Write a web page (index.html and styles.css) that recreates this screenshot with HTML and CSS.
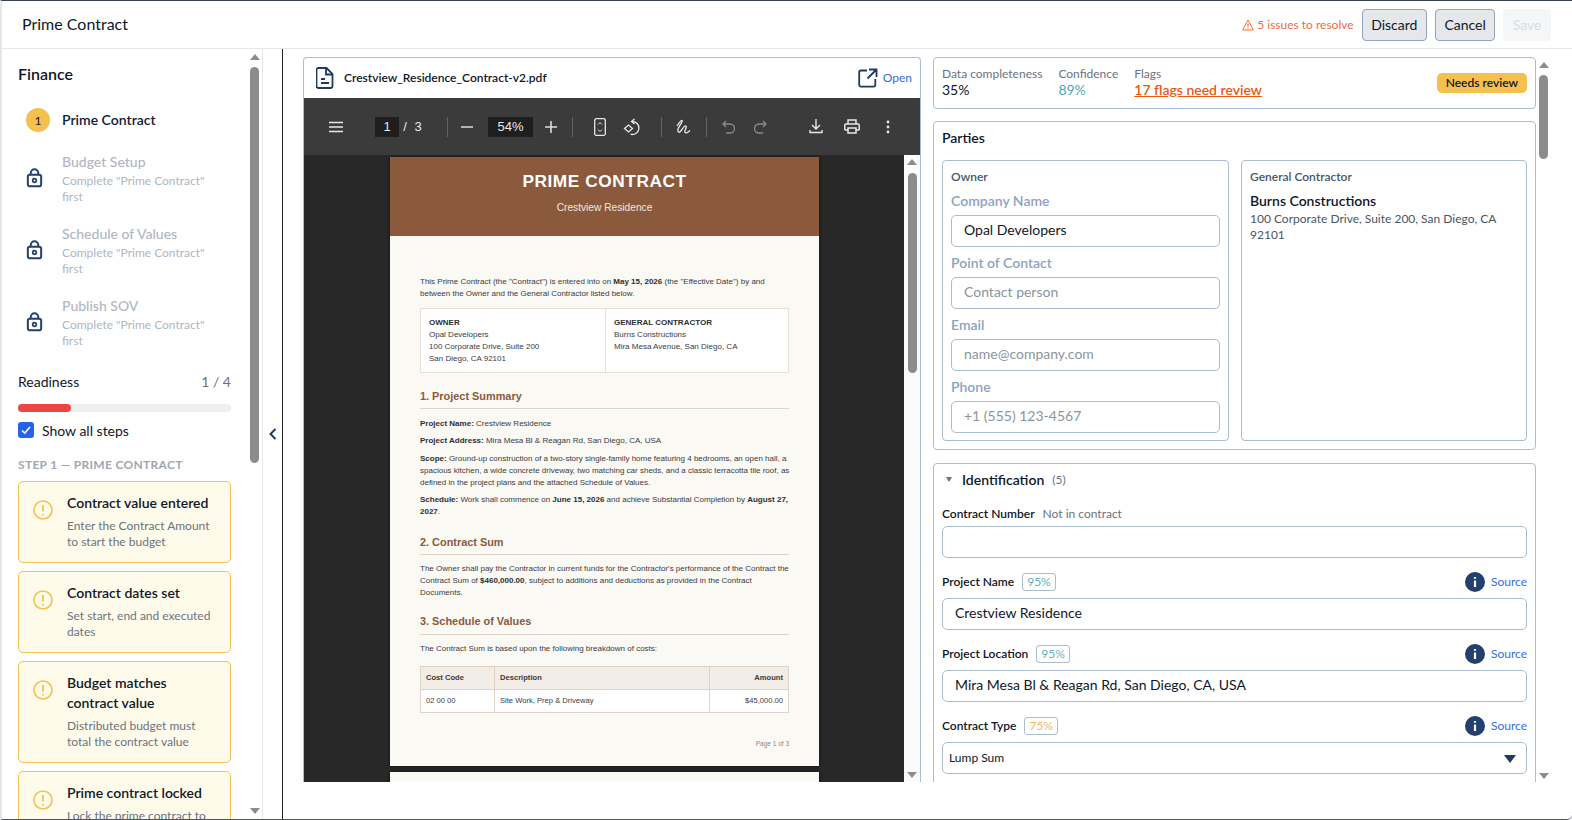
FILE: index.html
```html
<!DOCTYPE html>
<html lang="en">
<head>
    <meta charset="UTF-8">
    <title>Prime Contract</title>
    <link rel="stylesheet" href="styles.css">
</head>
<body>
    <svg class="defs" width="0" height="0">
        <symbol id="lock" viewBox="0 0 20 24"><path d="M5.5 8V6a4.5 4.5 0 0 1 9 0v2" fill="none" stroke="currentColor" stroke-width="2.4"/><rect x="2" y="8" width="16" height="14" rx="2.5" fill="none" stroke="currentColor" stroke-width="2.4"/><circle cx="10" cy="15" r="2.2" fill="none" stroke="currentColor" stroke-width="2"/></symbol>
        <symbol id="warn" viewBox="0 0 20 20"><circle cx="10" cy="10" r="9" fill="none" stroke="currentColor" stroke-width="1.6"/><path d="M10 5v6.5M10 14v1.4" fill="none" stroke="currentColor" stroke-width="1.8"/></symbol>
        <symbol id="info" viewBox="0 0 20 20"><circle cx="10" cy="10" r="10" fill="currentColor"/><path d="M10 8.5v6.5M10 5v1.8" stroke="#fff" stroke-width="2.2"/></symbol>
    </svg>

    <div class="app">
        <span class="green-tick"></span>

        <header class="topbar">
            <div class="topbar-title">Prime Contract</div>
            <div class="issues">
                <svg width="12" height="12" viewBox="0 0 12 12"><path d="M6 1 11.3 11H.7Z" fill="none" stroke="#f97316" stroke-width="1"/><path d="M6 4.5v3.3M6 8.8v1" stroke="#ef4444" stroke-width="1"/></svg>
                5 issues to resolve
            </div>
            <button class="btn">Discard</button>
            <button class="btn">Cancel</button>
            <button class="btn btn-off">Save</button>
        </header>

        <div class="content">
            <aside class="sidebar">
                <div class="side-body">
                    <h2 class="side-title">Finance</h2>

                    <div class="step step-current">
                        <span class="step-num">1</span>
                        <div class="step-name">Prime Contract</div>
                    </div>
                    <div class="step">
                        <svg class="step-lock"><use href="#lock"/></svg>
                        <div>
                            <div class="step-name">Budget Setup</div>
                            <div class="step-sub">Complete "Prime Contract"<br>first</div>
                        </div>
                    </div>
                    <div class="step">
                        <svg class="step-lock"><use href="#lock"/></svg>
                        <div>
                            <div class="step-name">Schedule of Values</div>
                            <div class="step-sub">Complete "Prime Contract"<br>first</div>
                        </div>
                    </div>
                    <div class="step">
                        <svg class="step-lock"><use href="#lock"/></svg>
                        <div>
                            <div class="step-name">Publish SOV</div>
                            <div class="step-sub">Complete "Prime Contract"<br>first</div>
                        </div>
                    </div>

                    <div class="ready-row"><span>Readiness</span><span class="ready-count">1 / 4</span></div>
                    <div class="progress"><div class="progress-fill" style="width: 25%"></div></div>
                    <label class="show-all">
                        <span class="checkbox"><svg width="12" height="12" viewBox="0 0 12 12"><path d="M2 6.5 4.8 9 10 3" fill="none" stroke="#fff" stroke-width="1.6"/></svg></span>
                        Show all steps
                    </label>
                    <div class="step-head">STEP 1 — PRIME CONTRACT</div>

                    <div class="check-card">
                        <svg class="check-icon"><use href="#warn"/></svg>
                        <div>
                            <div class="check-title">Contract value entered</div>
                            <div class="check-desc">Enter the Contract Amount to start the budget</div>
                        </div>
                    </div>
                    <div class="check-card">
                        <svg class="check-icon"><use href="#warn"/></svg>
                        <div>
                            <div class="check-title">Contract dates set</div>
                            <div class="check-desc">Set start, end and executed dates</div>
                        </div>
                    </div>
                    <div class="check-card">
                        <svg class="check-icon"><use href="#warn"/></svg>
                        <div>
                            <div class="check-title">Budget matches contract value</div>
                            <div class="check-desc">Distributed budget must total the contract value</div>
                        </div>
                    </div>
                    <div class="check-card">
                        <svg class="check-icon"><use href="#warn"/></svg>
                        <div>
                            <div class="check-title">Prime contract locked</div>
                            <div class="check-desc">Lock the prime contract to continue</div>
                        </div>
                    </div>
                </div>
                <div class="scroll scroll-side">
                    <span class="scroll-up"></span>
                    <span class="scroll-thumb"></span>
                    <span class="scroll-down"></span>
                </div>
            </aside>

            <div class="collapse-strip">
                <svg width="8" height="12" viewBox="0 0 8 12"><path d="M6.5 1 1.5 6l5 5" fill="none" stroke="#1e3a5f" stroke-width="2"/></svg>
            </div>

            <main class="main">
                <section class="pdf-card">
                    <div class="pdf-head">
                        <svg class="pdf-file" width="18" height="22" viewBox="0 0 18 22"><path d="M2.5 1h8L16.5 7v12a2 2 0 0 1-2 2h-12a2 2 0 0 1-2-2V3a2 2 0 0 1 2-2Z" fill="none" stroke="#1e3a5f" stroke-width="1.8"/><path d="M10 1.500V7.500h6M5 12h4M5 16h8" fill="none" stroke="#1e3a5f" stroke-width="1.8"/></svg>
                        <span class="pdf-name">Crestview_Residence_Contract-v2.pdf</span>
                        <svg class="pdf-open" width="20" height="20" viewBox="0 0 20 20"><path d="M9 2.500H3A1.800 1.800 0 0 0 1.200 4.300v12.500A1.800 1.800 0 0 0 3 18.600h12.500a1.800 1.800 0 0 0 1.800-1.800V11M11 1.500h7.500V9M18 2l-8.500 8.500" fill="none" stroke="#1e3a5f" stroke-width="1.800"/></svg>
                        <a class="link">Open</a>
                    </div>

                    <div class="pdf-tools">
                        <span class="tool"><svg width="16" height="12" viewBox="0 0 16 12"><path d="M1 1.500h14M1 6h14M1 10.500h14" stroke="#e8e8e8" stroke-width="1.500"/></svg></span>
                        <span class="page-box">1</span>
                        <span class="page-slash">/</span>
                        <span class="page-total">3</span>
                        <span class="sep sep-a"></span>
                        <span class="tool tool-minus"><svg width="12" height="2" viewBox="0 0 12 2"><path d="M0 1h12" stroke="#ddd" stroke-width="1.600"/></svg></span>
                        <span class="zoom-box">54%</span>
                        <span class="tool tool-plus"><svg width="12" height="12" viewBox="0 0 12 12"><path d="M0 6h12M6 0v12" stroke="#ddd" stroke-width="1.600"/></svg></span>
                        <span class="sep sep-b"></span>
                        <span class="tool tool-fit"><svg width="12" height="18" viewBox="0 0 12 18"><rect x=".7" y=".7" width="10.600" height="16.600" rx="1.500" fill="none" stroke="#e8e8e8" stroke-width="1.300"/><path d="m4 6.500 2-2 2 2M4 11.500l2 2 2-2" fill="none" stroke="#e8e8e8"/></svg></span>
                        <span class="tool"><svg width="18" height="18" viewBox="0 0 18 18"><path d="M9.500 3.500a6.500 6.500 0 1 1-2 12.700" fill="none" stroke="#e8e8e8" stroke-width="1.300"/><path d="M11.500 1 8.500 3.500l3 2.500" fill="none" stroke="#e8e8e8" stroke-width="1.300"/><path d="m5.500 7 4 3.500-4 3.500-4-3.500Z" fill="none" stroke="#e8e8e8" stroke-width="1.300"/></svg></span>
                        <span class="sep sep-c"></span>
                        <span class="tool tool-draw"><svg width="15" height="15" viewBox="0 0 15 15"><path d="M1 7c2-3 4-6 5-5.500S4 6 2.500 9 2.500 14 4 13s3-5 5-6 1 3 0 4.500 1 3 2.500 2 2-1.500 2.500-2" fill="none" stroke="#e8e8e8" stroke-width="1.300"/></svg></span>
                        <span class="sep sep-d"></span>
                        <span class="tool tool-undo"><svg width="13" height="14" viewBox="0 0 13 14"><path d="M4 1 1 4l3 3M1 4h7a4 4 0 0 1 0 9H4" fill="none" stroke="#8a8a8a" stroke-width="1.300"/></svg></span>
                        <span class="tool"><svg width="13" height="14" viewBox="0 0 13 14"><path d="m9 1 3 3-3 3M12 4H5a4 4 0 0 0 0 9h4" fill="none" stroke="#8a8a8a" stroke-width="1.300"/></svg></span>
                        <span class="tool-right">
                            <span class="tool"><svg width="14" height="15" viewBox="0 0 14 15"><path d="M7 0v9.500M3 6l4 4 4-4M1 11v2.500h12V11" fill="none" stroke="#e8e8e8" stroke-width="1.400"/></svg></span>
                            <span class="tool"><svg width="16" height="15" viewBox="0 0 16 15"><path d="M4 5V1h8v4M4 11H1.500A.8.8 0 0 1 .8 10V6A1 1 0 0 1 1.800 5h12.400a1 1 0 0 1 1 1v4a.8.8 0 0 1-.7 1H12M4 9h8v5H4Z" fill="none" stroke="#e8e8e8" stroke-width="1.500"/></svg></span>
                            <span class="tool"><svg width="4" height="14" viewBox="0 0 4 14"><circle cx="2" cy="2" r="1.400" fill="#e8e8e8"/><circle cx="2" cy="7" r="1.400" fill="#e8e8e8"/><circle cx="2" cy="12" r="1.400" fill="#e8e8e8"/></svg></span>
                        </span>
                    </div>

                    <div class="pdf-view">
                        <div class="pdf-pages">
                            <div class="sheet">
                                <div class="sheet-head">
                                    <div class="sheet-title">PRIME CONTRACT</div>
                                    <div class="sheet-sub">Crestview Residence</div>
                                </div>
                                <div class="sheet-body">
                                    <p class="intro">This Prime Contract (the "Contract") is entered into on <b>May 15, 2026</b> (the "Effective Date") by and<br>between the Owner and the General Contractor listed below.</p>
                                    <div class="sheet-parties">
                                        <div class="sheet-party"><b>OWNER</b><br>Opal Developers<br>100 Corporate Drive, Suite 200<br>San Diego, CA 92101</div>
                                        <div class="sheet-party"><b>GENERAL CONTRACTOR</b><br>Burns Constructions<br>Mira Mesa Avenue, San Diego, CA</div>
                                    </div>
                                    <h4 class="sheet-h h-one">1. Project Summary</h4>
                                    <p class="p-name"><b>Project Name:</b> Crestview Residence</p>
                                    <p class="p-addr"><b>Project Address:</b> Mira Mesa Bl &amp; Reagan Rd, San Diego, CA, USA</p>
                                    <p class="p-scope"><b>Scope:</b> Ground-up construction of a two-story single-family home featuring 4 bedrooms, an open hall, a<br>spacious kitchen, a wide concrete driveway, two matching car sheds, and a classic terracotta tile roof, as<br>defined in the project plans and the attached Schedule of Values.</p>
                                    <p class="p-addr"><b>Schedule:</b> Work shall commence on <b>June 15, 2026</b> and achieve Substantial Completion by <b>August 27,<br>2027</b>.</p>
                                    <h4 class="sheet-h h-two">2. Contract Sum</h4>
                                    <p class="p-sum">The Owner shall pay the Contractor in current funds for the Contractor's performance of the Contract the<br>Contract Sum of <b>$460,000.00</b>, subject to additions and deductions as provided in the Contract<br>Documents.</p>
                                    <h4 class="sheet-h h-three">3. Schedule of Values</h4>
                                    <p class="p-sov">The Contract Sum is based upon the following breakdown of costs:</p>
                                    <table class="sheet-table">
                                        <tr><th class="col-code">Cost Code</th><th class="col-desc">Description</th><th class="col-amt">Amount</th></tr>
                                        <tr><td>02 00 00</td><td>Site Work, Prep &amp; Driveway</td><td class="col-amt">$45,000.00</td></tr>
                                    </table>
                                    <div class="sheet-foot">Page 1 of 3</div>
                                </div>
                            </div>
                            <div class="sheet sheet-next"></div>
                        </div>
                        <div class="scroll scroll-pdf">
                            <span class="scroll-up"></span>
                            <span class="scroll-thumb"></span>
                            <span class="scroll-down"></span>
                        </div>
                    </div>
                </section>

                <section class="details">
                    <div class="card metrics">
                        <div class="metric"><div class="metric-label">Data completeness</div><div class="metric-val">35%</div></div>
                        <div class="metric"><div class="metric-label">Confidence</div><div class="metric-val val-teal">89%</div></div>
                        <div class="metric"><div class="metric-label">Flags</div><a class="metric-val val-flags">17 flags need review</a></div>
                        <span class="badge">Needs review</span>
                    </div>

                    <div class="card parties">
                        <h3 class="parties-title">Parties</h3>
                        <div class="parties-grid">
                            <div class="party">
                                <div class="party-label">Owner</div>
                                <div class="field-label">Company Name</div>
                                <input class="input input-party" value="Opal Developers">
                                <div class="field-label">Point of Contact</div>
                                <input class="input input-party" placeholder="Contact person">
                                <div class="field-label">Email</div>
                                <input class="input input-party" placeholder="name@company.com">
                                <div class="field-label">Phone</div>
                                <input class="input input-party" placeholder="+1 (555) 123-4567">
                            </div>
                            <div class="party">
                                <div class="party-label">General Contractor</div>
                                <div class="gc-name">Burns Constructions</div>
                                <div class="gc-addr">100 Corporate Drive, Suite 200, San Diego, CA 92101</div>
                            </div>
                        </div>
                    </div>

                    <div class="card ident">
                        <div class="ident-head">
                            <span class="caret"></span>
                            <span class="ident-title">Identification</span>
                            <span class="ident-count">(5)</span>
                        </div>

                        <div class="row-label">
                            <b>Contract Number</b><span class="not-in">Not in contract</span>
                        </div>
                        <input class="input">

                        <div class="row-label">
                            <b>Project Name</b><span class="pct pct-teal">95%</span>
                            <svg class="info"><use href="#info"/></svg><a class="link">Source</a>
                        </div>
                        <input class="input" value="Crestview Residence">

                        <div class="row-label">
                            <b>Project Location</b><span class="pct pct-teal">95%</span>
                            <svg class="info"><use href="#info"/></svg><a class="link">Source</a>
                        </div>
                        <input class="input" value="Mira Mesa Bl &amp; Reagan Rd, San Diego, CA, USA">

                        <div class="row-label">
                            <b>Contract Type</b><span class="pct pct-orange">75%</span>
                            <svg class="info"><use href="#info"/></svg><a class="link">Source</a>
                        </div>
                        <div class="select">Lump Sum<span class="select-arrow"></span></div>
                    </div>
                </section>

                <div class="scroll scroll-details">
                    <span class="scroll-up"></span>
                    <span class="scroll-thumb"></span>
                    <span class="scroll-down"></span>
                </div>
            </main>
        </div>
    </div>
</body>
</html>
```

FILE: styles.css
```css
* {
    margin: 0;
    padding: 0;
    box-sizing: border-box;
}

body {
    font-family: "Lato", sans-serif;
    color: #0f172a;
    background: #fff;
    width: 1572px;
    height: 820px;
    overflow: hidden;
}

.defs {
    position: absolute;
}

a {
    cursor: pointer;
}

.app {
    position: relative;
    height: 820px;
    display: flex;
    flex-direction: column;
    border-top: 1px solid #374151;
    border-bottom: 1px solid #4b5563;
    border-left: 2px solid #e5e7eb;
    border-bottom-right-radius: 5px;
    overflow: hidden;
}

.green-tick {
    position: absolute;
    left: -2px;
    top: 23px;
    width: 2px;
    height: 16px;
    background: #22c55e;
}

/* Top bar */
.topbar {
    height: 48px;
    flex: none;
    display: flex;
    align-items: center;
    gap: 8px;
    padding: 0 21px 0 20px;
    border-bottom: 1px solid #e5e7eb;
}

.topbar-title {
    font-size: 16px;
    flex: 1;
    padding-bottom: 2px;
}

.issues {
    display: flex;
    align-items: center;
    gap: 3px;
    font-size: 12px;
    color: #f26b3a;
}

.btn {
    height: 32px;
    padding: 0 8.5px;
    font-family: inherit;
    font-size: 14px;
    color: #0f172a;
    background: #e5e7eb;
    border: 1px solid #94a3b8;
    border-radius: 4px;
}

.btn-off {
    color: #d9dce1;
    background: #f5f6f7;
    border-color: #f5f6f7;
}

/* Layout */
.content {
    flex: 1;
    min-height: 0;
    display: flex;
}

.sidebar {
    width: 261px;
    flex: none;
    display: flex;
    border-right: 1px solid #e5e7eb;
}

.side-body {
    flex: 1;
    min-width: 0;
    overflow: hidden;
    padding: 15px 19px 0 16px;
}

.collapse-strip {
    width: 20px;
    flex: none;
    display: flex;
    align-items: center;
    justify-content: center;
    border-right: 1px solid #222;
}

.main {
    flex: 1;
    min-width: 0;
    height: 733px;
    display: flex;
    padding: 8px 0 0 20px;
}

/* Fake scrollbars */
.scroll {
    width: 9px;
    flex: none;
    display: flex;
    flex-direction: column;
    align-items: center;
}

.scroll-up {
    width: 0;
    height: 0;
    border-left: 5px solid transparent;
    border-right: 5px solid transparent;
    border-bottom: 6px solid #8c8c8c;
}

.scroll-down {
    width: 0;
    height: 0;
    margin-top: auto;
    border-left: 5px solid transparent;
    border-right: 5px solid transparent;
    border-top: 6px solid #8c8c8c;
}

.scroll-thumb {
    width: 9px;
    background: #8c8c8c;
    border-radius: 5px;
    margin-top: 7px;
}

.scroll-side {
    margin-right: 3px;
    padding: 5px 0;
}

.scroll-side .scroll-thumb {
    height: 396px;
}

.scroll-details {
    margin: 0 24px 0 3px;
    padding: 5px 0 3px;
}

.scroll-details .scroll-thumb {
    height: 84px;
}

/* Sidebar */
.side-title {
    font-size: 16px;
    font-weight: 600;
    line-height: 20px;
    margin-bottom: 21px;
}

.step {
    display: flex;
    align-items: center;
    gap: 19px;
    padding-left: 8px;
    height: 72px;
}

.step-current {
    height: 50px;
    gap: 12px;
    margin-top: -10px;
    margin-bottom: -3px;
}

.step-num {
    width: 24px;
    height: 24px;
    border-radius: 50%;
    background: #f6c04f;
    font-size: 12px;
    display: flex;
    align-items: center;
    justify-content: center;
}

.step-name {
    font-size: 14px;
    font-weight: 500;
    line-height: 20px;
    color: #b1b6c1;
}

.step-current .step-name {
    color: #111c33;
    font-weight: 600;
}

.step-sub {
    font-size: 12px;
    line-height: 16px;
    margin-top: 1px;
    color: #b1b6c1;
}

.step-lock {
    width: 17px;
    height: 20px;
    color: #23406e;
    flex: none;
}

.ready-row {
    display: flex;
    justify-content: space-between;
    font-size: 14px;
    line-height: 20px;
    margin-top: 14px;
}

.ready-count {
    color: #6b7280;
}

.progress {
    height: 8px;
    margin-top: 12px;
    background: #eeeff1;
    border-radius: 4px;
}

.progress-fill {
    height: 100%;
    background: #ef4444;
    border-radius: 4px;
}

.show-all {
    display: flex;
    align-items: center;
    gap: 8px;
    height: 16px;
    font-size: 14px;
    margin-top: 10px;
}

.checkbox {
    width: 16px;
    height: 16px;
    background: #2563eb;
    border-radius: 3px;
    display: flex;
    align-items: center;
    justify-content: center;
}

.step-head {
    font-size: 12px;
    font-weight: 700;
    letter-spacing: 0.3px;
    color: #a0a6b2;
    line-height: 16px;
    margin-top: 19px;
    margin-bottom: 8px;
    white-space: nowrap;
}

.check-card {
    display: flex;
    gap: 14px;
    padding: 11px 14px 12px 14px;
    margin-bottom: 8px;
    background: #fffbeb;
    border: 1px solid #f6c04f;
    border-radius: 5px;
}

.check-icon {
    width: 20px;
    height: 20px;
    flex: none;
    color: #f6c04f;
    margin-top: 7px;
}

.check-title {
    font-size: 14px;
    font-weight: 600;
    line-height: 20px;
    margin-bottom: 5px;
}

.check-desc {
    font-size: 12px;
    line-height: 16px;
    color: #6b7280;
}

/* PDF panel */
.pdf-card {
    width: 618px;
    flex: none;
    display: flex;
    flex-direction: column;
    border: 1px solid #a9bdd3;
    border-bottom: 0;
    border-radius: 4px 4px 0 0;
    overflow: hidden;
}

.pdf-head {
    height: 40px;
    flex: none;
    display: flex;
    align-items: center;
    padding: 0 8px 0 12px;
}

.pdf-name {
    font-size: 12px;
    font-weight: 600;
    margin: 0 0 2px 10px;
    flex: 1;
}

.pdf-open {
    margin-right: 5px;
}

.link {
    font-size: 12px;
    color: #2f6fe0;
}

.pdf-head .link {
    margin-bottom: 2px;
}

.pdf-tools {
    height: 57px;
    flex: none;
    display: flex;
    align-items: center;
    padding: 0 16px;
    background: #3b3b3b;
    color: #e8e8e8;
    font-family: "Liberation Sans", sans-serif;
    font-size: 13px;
}

.tool {
    width: 32px;
    height: 32px;
    flex: none;
    display: flex;
    align-items: center;
    justify-content: center;
}

.page-box {
    width: 24px;
    height: 20px;
    margin-left: 23px;
    background: #1e1e1e;
    text-align: center;
    line-height: 20px;
}

.page-slash {
    width: 12px;
    text-align: center;
}

.page-total {
    width: 14px;
    text-align: center;
}

.zoom-box {
    width: 45px;
    height: 20px;
    margin-left: 5px;
    background: #1e1e1e;
    text-align: center;
    line-height: 20px;
}

.sep {
    width: 1px;
    height: 20px;
    background: #626262;
    flex: none;
}

.sep-a { margin-left: 22px; }
.sep-b { margin-left: 5px; }
.sep-c { margin-left: 13px; }
.sep-d { margin-left: 7px; }
.tool-minus { margin-left: 3px; }
.tool-plus { margin-left: 2px; }
.tool-fit { margin-left: 11px; }
.tool-draw { margin-left: 5px; }
.tool-undo { margin-left: 5px; }

.tool-right {
    margin-left: auto;
    display: flex;
    gap: 4px;
}

.pdf-view {
    flex: 1;
    min-height: 0;
    display: flex;
}

.pdf-pages {
    flex: 1;
    min-width: 0;
    overflow: hidden;
    background: #282828;
    padding: 2px 0 0 1px;
    display: flex;
    flex-direction: column;
    align-items: center;
    gap: 6px;
}

.scroll-pdf {
    width: 16px;
    background: #fbfbfb;
    padding: 4px 0 4px;
}

.scroll-pdf .scroll-thumb {
    height: 200px;
    margin-top: 8px;
}

/* The contract sheet inside the viewer */
.sheet {
    width: 429px;
    flex: none;
    background: #fbf9f4;
    color: #3a3a44;
    font-family: "Liberation Sans", Arial, sans-serif;
    font-size: 8px;
    line-height: 12px;
    white-space: nowrap;
    box-shadow: 0 0 3px #111;
}

.sheet-next {
    height: 60px;
}

.sheet-head {
    height: 79px;
    background: #8b5a3c;
    color: #fff;
    text-align: center;
    padding-top: 14px;
}

.sheet-title {
    font-size: 17.3px;
    font-weight: bold;
    line-height: 20px;
    letter-spacing: 0.55px;
}

.sheet-sub {
    font-size: 10.2px;
    line-height: 12px;
    margin-top: 11px;
    color: #f1e7df;
}

.sheet-body {
    padding: 40px 30px 16px;
}

.sheet-body b {
    color: #2e2e33;
}

.sheet-parties {
    display: grid;
    grid-template-columns: 184px 1fr;
    margin-top: 8px;
    width: 369px;
    height: 65px;
    background: #fff;
    border: 1px solid #e8e0d8;
}

.sheet-party {
    padding: 8px 8px 6px;
}

.sheet-party + .sheet-party {
    border-left: 1px solid #e8e0d8;
}

.sheet-h {
    font-size: 10.9px;
    line-height: 12px;
    color: #8b5a3c;
    padding-bottom: 6px;
    border-bottom: 1px solid #ded3c8;
}

.h-one { margin-top: 17px; }
.h-two { margin-top: 18px; }
.h-three { margin-top: 16px; padding-bottom: 7px; }

.p-name { margin-top: 9px; }
.p-addr { margin-top: 5px; }
.p-scope { margin-top: 6px; }
.p-sum { margin-top: 8px; }
.p-sov { margin-top: 8px; }

.sheet-table {
    width: 369px;
    margin-top: 11px;
    border-collapse: collapse;
    table-layout: fixed;
    background: #fff;
    font-size: 7.6px;
}

.sheet-table th,
.sheet-table td {
    height: 23px;
    padding: 0 5px 1px;
    border: 1px solid #e0d3c6;
    text-align: left;
    font-weight: normal;
}

.sheet-table th {
    background: #f2ece6;
    font-weight: bold;
    color: #3f3a36;
}

.sheet-table .col-code { width: 74px; }
.sheet-table .col-desc { width: 215px; }
.sheet-table .col-amt { text-align: right; }

.sheet-foot {
    margin-top: 25px;
    font-size: 6.5px;
    color: #8a8a8a;
    text-align: right;
}

/* Right panel */
.details {
    width: 603px;
    flex: none;
    margin-left: 12px;
    overflow: hidden;
}

.card {
    border: 1px solid #a9bdd3;
    border-radius: 4px;
    padding: 0 8px;
}

.metrics {
    height: 52px;
    display: flex;
    align-items: center;
    gap: 16px;
    padding-bottom: 3px;
}

.metric-label {
    font-size: 12px;
    line-height: 16px;
    color: #6b7280;
}

.metric-val {
    display: block;
    font-size: 14px;
    line-height: 16px;
}

.val-teal {
    color: #4fa8b5;
}

.val-flags {
    color: #ea580c;
    text-decoration: underline;
    font-weight: 600;
}

.badge {
    margin-left: auto;
    height: 20px;
    padding: 0 9px;
    font-size: 12px;
    font-weight: 600;
    line-height: 20px;
    background: #f6c04f;
    border-radius: 5px;
    margin-top: 2px;
}

.parties {
    height: 329px;
    margin-top: 12px;
}

.parties-title {
    font-size: 14px;
    font-weight: 600;
    line-height: 20px;
    margin-top: 6px;
}

.parties-grid {
    display: grid;
    grid-template-columns: 287px 286px;
    gap: 12px;
    margin-top: 12px;
}

.party {
    height: 281px;
    border: 1px solid #a9bdd3;
    border-radius: 4px;
    padding: 8px;
}

.party-label {
    font-size: 12px;
    font-weight: 600;
    line-height: 16px;
    color: #4b5563;
}

.field-label {
    font-size: 14px;
    font-weight: 600;
    line-height: 20px;
    margin: 6px 0 4px;
    color: #8ba3bf;
}

.input {
    display: block;
    width: 100%;
    height: 32px;
    padding: 0 12px 3px;
    font-family: inherit;
    font-size: 14px;
    color: #0f172a;
    border: 1px solid #a9bdd3;
    border-radius: 5px;
    background: #fff;
    outline: 0;
}

.input::placeholder {
    color: #8d94a0;
}

.input-party {
    margin-bottom: 4px;
}

.gc-name {
    font-size: 14px;
    font-weight: 600;
    line-height: 20px;
    margin-top: 6px;
}

.gc-addr {
    font-size: 12px;
    line-height: 16px;
    color: #4b5563;
}

.ident {
    margin-top: 13px;
    height: 360px;
}

.ident-head {
    display: flex;
    align-items: center;
    height: 33px;
    padding-bottom: 2px;
}

.caret {
    width: 0;
    height: 0;
    margin-left: 4px;
    border-left: 3px solid transparent;
    border-right: 3px solid transparent;
    border-top: 5px solid #6b7280;
}

.ident-title {
    font-size: 14px;
    font-weight: 600;
    margin-left: 10px;
}

.ident-count {
    font-size: 12px;
    color: #6b7280;
    margin-left: 8px;
}

.row-label {
    height: 29px;
    display: flex;
    align-items: center;
    font-size: 12px;
    padding-top: 3px;
}

.row-label b {
    font-weight: 600;
}

.input + .row-label {
    height: 40px;
    padding-top: 7px;
}

.not-in {
    color: #6b7280;
    margin-left: 8px;
}

.pct {
    height: 18px;
    padding: 0 4px;
    margin-left: 8px;
    line-height: 16px;
    border: 1px solid #a9bdd3;
    border-radius: 3px;
}

.pct-teal {
    color: #5fb0bd;
}

.pct-orange {
    color: #f4b862;
}

.info {
    width: 20px;
    height: 20px;
    margin-left: auto;
    margin-right: 6px;
    color: #23406e;
}

.select {
    position: relative;
    height: 32px;
    padding: 0 6px;
    line-height: 30px;
    font-size: 12px;
    border: 1px solid #a9bdd3;
    border-radius: 5px;
}

.select-arrow {
    position: absolute;
    right: 10px;
    top: 12px;
    width: 0;
    height: 0;
    border-left: 6px solid transparent;
    border-right: 6px solid transparent;
    border-top: 8px solid #1e3a5f;
}
```
